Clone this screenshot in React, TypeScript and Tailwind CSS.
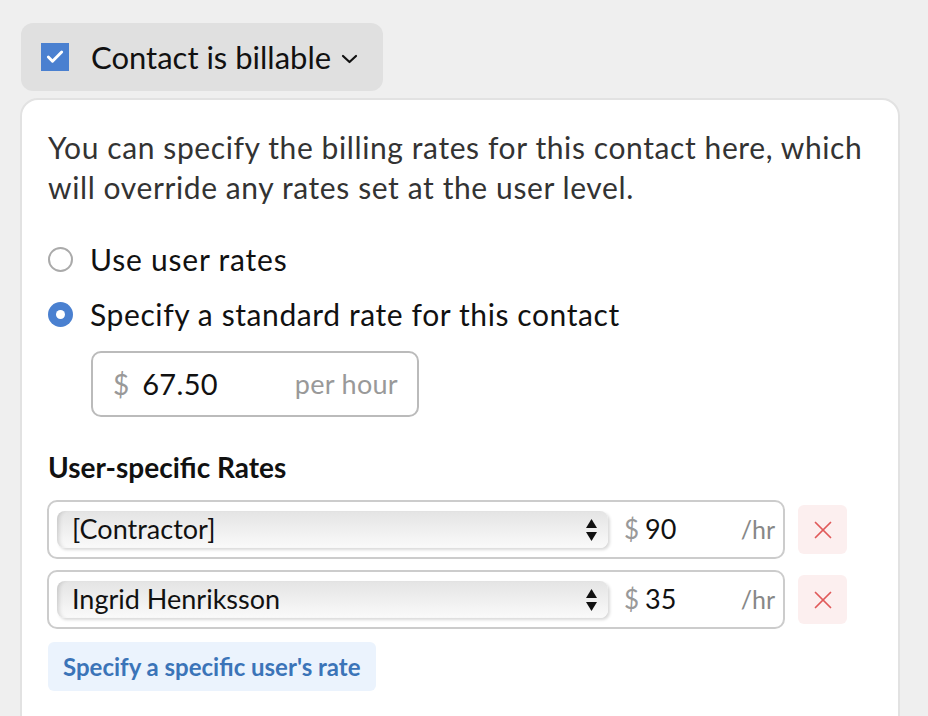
import { Check, X } from "lucide-react";

interface RateRow {
    name: string;
    amount: string;
}

const rows: RateRow[] = [
    { name: "[Contractor]", amount: "90" },
    { name: "Ingrid Henriksson", amount: "35" },
];

const font = { fontFamily: "Lato, 'Noto Sans', sans-serif" };

const App = () => {
    return (
        <div className="w-[928px] h-[716px] overflow-hidden bg-[#efefef] text-[#111]" style={font}>
            <div className="pt-[23px] pl-[21px]">
                <div className="inline-flex items-center h-[68px] px-5 gap-[22px] bg-[#e0e0e0] rounded-[12px] w-[362px]">
                    <span className="w-[28px] h-[28px] bg-[#4a80d0] flex items-center justify-center">
                        <Check className="text-white" size={20} strokeWidth={3.5} />
                    </span>
                    <span className="text-[31px] leading-none flex items-center gap-[10px]">
                        Contact is billable
                        <svg width="17" height="10" viewBox="0 0 17 10" className="mt-[3px]">
                            <polyline points="2,2 8.5,8 15,2" fill="none" stroke="#111" strokeWidth="2.2" strokeLinecap="round" strokeLinejoin="round" />
                        </svg>
                    </span>
                </div>
            </div>
            <div className="ml-[20px] mt-[7px] w-[880px] h-[640px] bg-white border-2 border-[#e2e2e2] rounded-[18px] pl-[26px] pr-5 pt-[27px]">
                <p className="text-[30px] leading-[40px] tracking-[0.6px] text-[#333]">
                    You can specify the billing rates for this contact here, which will override any rates set at the user level.
                </p>
                <div className="mt-[32px] flex items-center gap-[17px] h-[40px]">
                    <span className="w-[25px] h-[25px] rounded-full border-2 border-[#aaa] bg-white" />
                    <span className="text-[30px] tracking-[0.8px]">Use user rates</span>
                </div>
                <div className="mt-[15px] flex items-center gap-[17px] h-[40px]">
                    <span className="w-[25px] h-[25px] rounded-full bg-[#4a80d0] flex items-center justify-center">
                        <span className="w-[9px] h-[9px] rounded-full bg-white" />
                    </span>
                    <span className="text-[30px] tracking-[0.6px]">Specify a standard rate for this contact</span>
                </div>
                <div className="ml-[43px] mt-[17px] w-[328px] h-[66px] border-2 border-[#bbb] rounded-[10px] flex items-center pl-5 pr-[19px]">
                    <span className="text-[28px] text-[#999]">$</span>
                    <span className="ml-[13px] text-[29px] tracking-[0.3px] text-[#111]">67.50</span>
                    <span className="ml-auto text-[#999] text-[27px] tracking-[0.3px]">per hour</span>
                </div>
                <h3 className="mt-[34px] h-[32px] leading-[32px] text-[28px] font-bold text-[#111]">User-specific Rates</h3>
                <div className="mt-[17px] flex flex-col gap-[11px]">
                    {rows.map(row => (
                        <div key={row.name} className="flex items-center gap-[13px]">
                            <div className="w-[738px] h-[59px] border-2 border-[#ccc] rounded-[10px] flex items-center pl-[8px] pr-[8px] -ml-[1px]">
                                <div className="w-[551px] h-[37px] rounded-[8px] bg-gradient-to-b from-[#e4e4e4] via-[#efefef] to-[#fafafa] shadow-[inset_5px_0_4px_-3px_rgba(0,0,0,0.15),2px_2px_3px_rgba(0,0,0,0.15)] flex items-center pl-[15px] pr-[10px]">
                                    <span className="text-[27px] text-[#111]">{row.name}</span>
                                    <svg className="ml-auto" width="13" height="24" viewBox="0 0 13 24">
                                        <path d="M6.5 1 L12 10 H1 Z" fill="#111" />
                                        <path d="M6.5 23 L12 14 H1 Z" fill="#111" />
                                    </svg>
                                </div>
                                <span className="ml-[16px] text-[26px] text-[#999]">$</span>
                                <span className="ml-[6px] text-[27px] text-[#111]">{row.amount}</span>
                                <span className="ml-auto text-[25px] text-[#888]">/hr</span>
                            </div>
                            <button className="w-[49px] h-[49px] rounded-[6px] bg-[#fcefef] flex items-center justify-center">
                                <X size={30} strokeWidth={1.4} className="text-[#e05a5a]" />
                            </button>
                        </div>
                    ))}
                </div>
                <button className="mt-[13px] h-[49px] px-[15px] rounded-[6px] bg-[#ebf3fd] text-[#3b74b8] text-[24px] font-bold">
                    Specify a specific user's rate
                </button>
            </div>
        </div>
    );
}

export default App;
